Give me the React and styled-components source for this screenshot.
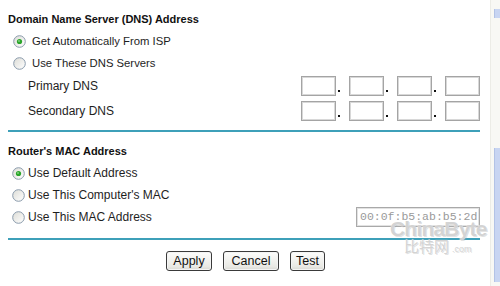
import React from "react";
import styled, { createGlobalStyle } from "styled-components";

const Global = createGlobalStyle`
  html, body { margin: 0; padding: 0; background: #fff; }
  body { font-family: "Liberation Sans", Arial, sans-serif; color: #1a1a1a; }
`;

const Page = styled.div`
  display: flex;
  width: 500px;
  height: 286px;
  overflow: hidden;
  background: #fff;
`;

const Main = styled.div`
  width: 490px;
  padding: 9px 10px 0 8px;
  box-sizing: border-box;
  display: flex;
  flex-direction: column;
  position: relative;
`;

const Heading = styled.div`
  height: 20px;
  line-height: 20px;
  font-size: 11px;
  font-weight: bold;
  color: #111;
  margin-top: ${(p) => p.$mt || 0}px;
`;

const Row = styled.div`
  height: 20px;
  display: flex;
  align-items: center;
  justify-content: space-between;
  margin-top: ${(p) => p.$mt || 0}px;
`;

const Choice = styled.label`
  display: flex;
  align-items: center;
  gap: ${(p) => p.$gap}px;
  padding-left: ${(p) => p.$indent}px;
  font-size: ${(p) => p.$size}px;
  color: #1e1e1e;
`;

const Label = styled.span`
  padding-left: 20px;
  font-size: 12px;
  color: #1e1e1e;
`;

const IpGroup = styled.div`
  display: flex;
  align-items: center;
`;

const IpBox = styled.div`
  width: ${(p) => p.$w}px;
  height: 20px;
  box-sizing: border-box;
  border: 1px solid #a4a4a4;
  box-shadow: inset 0 0 0 1px #d8d8d8;
  background: #fff;
`;

const Dot = styled.span`
  width: 13px;
  height: 20px;
  position: relative;
  &::after {
    content: "";
    position: absolute;
    left: 2px;
    bottom: 4px;
    width: 2px;
    height: 2px;
    background: #111;
  }
`;

const Divider = styled.div`
  height: 2px;
  background: #3ea0b9;
  margin-top: ${(p) => p.$mt}px;
`;

const MacBox = styled.div`
  width: 124px;
  height: 20px;
  box-sizing: border-box;
  border: 1px solid #a9a9a9;
  box-shadow: inset 0 0 0 1px #e2e2e2;
  font-family: "Liberation Mono", "Courier New", monospace;
  font-size: 11.5px;
  color: #9a9a9a;
  line-height: 18px;
  padding-left: 3px;
  white-space: nowrap;
  overflow: hidden;
`;

const Buttons = styled.div`
  display: flex;
  justify-content: center;
  gap: 11px;
  margin-top: 11px;
  padding-left: 3px;
`;

const Button = styled.button`
  width: ${(p) => p.$w}px;
  height: 20px;
  padding: 0;
  box-sizing: border-box;
  border: 1px solid #3a3a3a;
  border-radius: 3px;
  background: linear-gradient(#fdfdfc, #e9e9e4 80%, #d9d9d3);
  box-shadow: inset 0 0 0 1px #f4f4f4;
  font-family: "Liberation Sans", Arial, sans-serif;
  font-size: 12.5px;
  color: #111;
`;

const Scrollbar = styled.div`
  width: 10px;
  height: 286px;
  box-sizing: border-box;
  border-left: 1px solid #ecece6;
  background: #f8f8f4;
  display: flex;
  flex-direction: column;
  align-items: flex-end;
`;

const ScrollPiece = styled.div`
  width: 5px;
  height: ${(p) => p.$h}px;
  margin-top: ${(p) => p.$mt}px;
  background: #c8d5f2;
  border-left: 1px solid #b3c3e6;
`;

const Watermark = styled.div`
  position: absolute;
  left: 390px;
  top: 219px;
  width: 100px;
  font-family: "Liberation Sans", Arial, sans-serif;
  color: rgba(200, 200, 200, 0.8);
  text-shadow: 0 0 1px #fff, 1px 1px 0 rgba(150,150,150,0.3);
  pointer-events: none;
`;

const WmBig = styled.div`
  font-size: 21px;
  font-weight: bold;
  letter-spacing: -0.8px;
  line-height: 19px;
`;

const WmSmall = styled.div`
  display: flex;
  align-items: baseline;
  gap: 3px;
  padding-left: 14px;
  font-size: 15px;
  line-height: 15px;
  font-family: "Noto Sans CJK SC", sans-serif;
  span { font-family: "Liberation Sans", Arial, sans-serif; font-size: 9px; }
`;

function Radio({ checked }) {
  return (
    <svg width="13" height="13" viewBox="0 0 13 13">
      <defs>
        <linearGradient id={checked ? "rgc" : "rgu"} x1="0" y1="0" x2="1" y2="1">
          <stop offset="0" stopColor="#dcdcd6" />
          <stop offset="1" stopColor="#ffffff" />
        </linearGradient>
      </defs>
      <circle cx="6.5" cy="6.5" r="5.8" fill={`url(#${checked ? "rgc" : "rgu"})`} stroke="#8a9bac" strokeWidth="1" />
      {checked && <circle cx="6.5" cy="6.5" r="2.6" fill="#2aa52a" />}
      {checked && <circle cx="6" cy="6" r="1" fill="#7fd07f" />}
    </svg>
  );
}

function IpFields() {
  return (
    <IpGroup>
      <IpBox $w={35} />
      <Dot />
      <IpBox $w={35} />
      <Dot />
      <IpBox $w={35} />
      <Dot />
      <IpBox $w={35} />
    </IpGroup>
  );
}

export default function App() {
  return (
    <>
      <Global />
      <Page>
        <Main>
          <Heading>Domain Name Server (DNS) Address</Heading>
          <Row $mt={2}>
            <Choice $indent={5} $gap={6} $size={11.3}>
              <Radio checked />
              Get Automatically From ISP
            </Choice>
          </Row>
          <Row $mt={2}>
            <Choice $indent={5} $gap={6} $size={11.3}>
              <Radio />
              Use These DNS Servers
            </Choice>
          </Row>
          <Row $mt={3}>
            <Label>Primary DNS</Label>
            <IpFields />
          </Row>
          <Row $mt={5}>
            <Label>Secondary DNS</Label>
            <IpFields />
          </Row>
          <Divider $mt={9} />
          <Heading $mt={9}>Router's MAC Address</Heading>
          <Row $mt={2}>
            <Choice $indent={4} $gap={3} $size={12}>
              <Radio checked />
              Use Default Address
            </Choice>
          </Row>
          <Row $mt={2}>
            <Choice $indent={4} $gap={3} $size={12}>
              <Radio />
              Use This Computer's MAC
            </Choice>
          </Row>
          <Row $mt={2}>
            <Choice $indent={4} $gap={3} $size={12}>
              <Radio />
              Use This MAC Address
            </Choice>
            <MacBox>00:0f:b5:ab:b5:2d</MacBox>
          </Row>
          <Divider $mt={11} />
          <Buttons>
            <Button $w={46}>Apply</Button>
            <Button $w={56}>Cancel</Button>
            <Button $w={35}>Test</Button>
          </Buttons>
          <Watermark>
            <WmBig>ChinaByte</WmBig>
            <WmSmall>比特网<span>.com</span></WmSmall>
          </Watermark>
        </Main>
        <Scrollbar>
          <ScrollPiece $mt={9} $h={9} />
          <ScrollPiece $mt={130} $h={134} />
        </Scrollbar>
      </Page>
    </>
  );
}
